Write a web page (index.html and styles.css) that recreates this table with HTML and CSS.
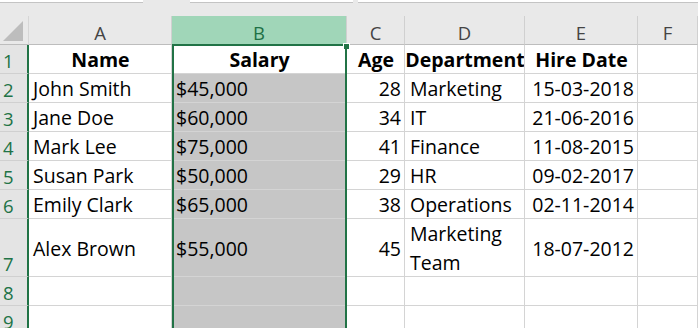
FILE: index.html
```html
<!DOCTYPE html>
<html>
<head>
<meta charset="utf-8">
<link rel="stylesheet" href="styles.css">
</head>
<body>
<div class="app">
  <div class="fbar">
    <div class="box namebox"></div>
    <div class="box mid"></div>
    <div class="box formula"></div>
  </div>
  <div class="gridwrap">
    <div class="grid">
      <div class="corner"><svg width="22" height="22" viewBox="0 0 22 22"><polygon points="1,21 21,21 21,1" fill="#bdbdbd"/></svg></div>
      <div class="ch">A</div>
      <div class="ch sel">B</div>
      <div class="ch">C</div>
      <div class="ch">D</div>
      <div class="ch">E</div>
      <div class="ch">F</div>

      <div class="rh">1</div>
      <div class="c b">Name</div>
      <div class="c b active">Salary</div>
      <div class="c b">Age</div>
      <div class="c b">Department</div>
      <div class="c b">Hire Date</div>
      <div class="c"></div>

      <div class="rh">2</div>
      <div class="c">John Smith</div>
      <div class="c g">$45,000</div>
      <div class="c r">28</div>
      <div class="c d">Marketing</div>
      <div class="c r">15-03-2018</div>
      <div class="c"></div>

      <div class="rh">3</div>
      <div class="c">Jane Doe</div>
      <div class="c g">$60,000</div>
      <div class="c r">34</div>
      <div class="c d">IT</div>
      <div class="c r">21-06-2016</div>
      <div class="c"></div>

      <div class="rh">4</div>
      <div class="c">Mark Lee</div>
      <div class="c g">$75,000</div>
      <div class="c r">41</div>
      <div class="c d">Finance</div>
      <div class="c r">11-08-2015</div>
      <div class="c"></div>

      <div class="rh">5</div>
      <div class="c">Susan Park</div>
      <div class="c g">$50,000</div>
      <div class="c r">29</div>
      <div class="c d">HR</div>
      <div class="c r">09-02-2017</div>
      <div class="c"></div>

      <div class="rh">6</div>
      <div class="c">Emily Clark</div>
      <div class="c g">$65,000</div>
      <div class="c r">38</div>
      <div class="c d">Operations</div>
      <div class="c r">02-11-2014</div>
      <div class="c"></div>

      <div class="rh">7</div>
      <div class="c">Alex Brown</div>
      <div class="c g">$55,000</div>
      <div class="c r">45</div>
      <div class="c d wrap">Marketing Team</div>
      <div class="c r">18-07-2012</div>
      <div class="c"></div>

      <div class="rh">8</div>
      <div class="c"></div>
      <div class="c g"></div>
      <div class="c"></div>
      <div class="c"></div>
      <div class="c"></div>
      <div class="c"></div>

      <div class="rh">9</div>
      <div class="c"></div>
      <div class="c g"></div>
      <div class="c"></div>
      <div class="c"></div>
      <div class="c"></div>
      <div class="c"></div>
    </div>
    <div class="selection"><span class="handle"></span></div>
  </div>
</div>
</body>
</html>
```
FILE: styles.css
```css
html, body {
  margin: 0;
  padding: 0;
  overflow: hidden;
  background: #e9e9e9;
  font-family: "Open Sans", "Noto Sans", sans-serif;
}
.app {
  width: 698px;
  height: 328px;
  overflow: hidden;
}
.fbar {
  height: 16px;
  display: flex;
  align-items: flex-start;
}
.fbar .box {
  height: 2px;
  background: #fff;
  border-bottom: 1px solid #c4c4c4;
}
.namebox { width: 143px; margin-right: 47px; }
.mid { width: 163px; margin-right: 5px; }
.formula { flex: 1; }

.gridwrap {
  position: relative;
}
.grid {
  display: grid;
  grid-template-columns: 29px 143px 175px 58px 120px 113px 1fr;
  grid-template-rows: 29px repeat(6, 29px) 58px 29px 29px;
}
.corner {
  background: #e9e9e9;
  border-right: 1px solid #d6d6d6;
  border-bottom: 1px solid #bdbdbd;
  box-sizing: border-box;
  display: flex;
  align-items: flex-end;
  justify-content: flex-end;
  padding: 0 4px 2px 0;
}
.corner svg { display: block; }
.ch {
  background: #e9e9e9;
  border-right: 1px solid #d0d0d0;
  border-bottom: 1px solid #bdbdbd;
  box-sizing: border-box;
  display: flex;
  align-items: center;
  justify-content: center;
  font-size: 18.5px;
  color: #444;
  padding-top: 5px;
}
.ch.sel {
  background: #a0d6b8;
  color: #1e7145;
}
.rh {
  background: #e4e4e4;
  border-right: 2px solid #217346;
  border-bottom: 1px solid #d0d0d0;
  box-sizing: border-box;
  color: #217346;
  font-size: 18.5px;
  line-height: 25px;
  padding-left: 3px;
  display: flex;
  align-items: flex-end;
}
.c {
  background: #fff;
  border-right: 1px solid #d4d4d4;
  border-bottom: 1px solid #d4d4d4;
  box-sizing: border-box;
  font-size: 19.5px;
  line-height: 28px;
  padding: 2px 3px 0 4px;
  display: flex;
  align-items: center;
  white-space: nowrap;
  overflow: hidden;
  color: #000;
}
.c.b {
  font-weight: 700;
  justify-content: center;
}
.c.r { justify-content: flex-end; }
.c.d { padding-left: 5px; }
.c.g { background: #c6c6c6; padding-left: 4px; }
.c.wrap {
  white-space: normal;
  line-height: 29px;
  padding-top: 1px;
}
.selection {
  position: absolute;
  left: 172px;
  top: 28px;
  width: 175px;
  bottom: -20px;
  border: 2px solid #217346;
  box-sizing: border-box;
  pointer-events: none;
}
.handle {
  position: absolute;
  right: -5px;
  top: -3px;
  width: 5px;
  height: 5px;
  background: #217346;
  border: 1px solid #fff;
  border-bottom: none;
}
```
